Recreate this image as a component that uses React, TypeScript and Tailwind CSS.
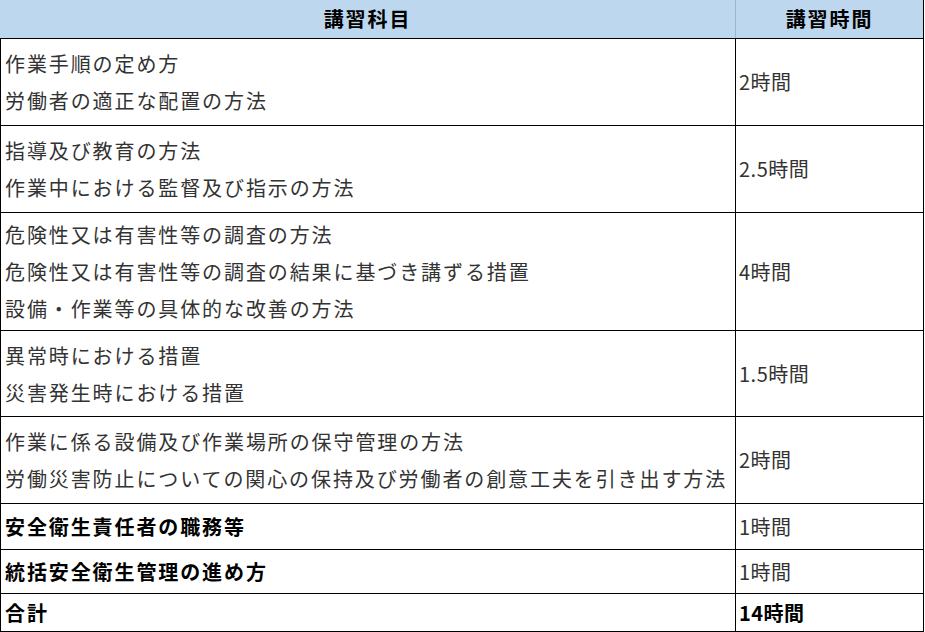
import React from 'react';

type Row = {
  lines: string[];
  time: string;
  h: string;
  bold?: boolean;
  boldTime?: boolean;
};

const rows: Row[] = [
  { lines: ['作業手順の定め方', '労働者の適正な配置の方法'], time: '2時間', h: 'h-[87px]' },
  { lines: ['指導及び教育の方法', '作業中における監督及び指示の方法'], time: '2.5時間', h: 'h-[87px]' },
  {
    lines: [
      '危険性又は有害性等の調査の方法',
      '危険性又は有害性等の調査の結果に基づき講ずる措置',
      '設備・作業等の具体的な改善の方法',
    ],
    time: '4時間',
    h: 'h-[118px]',
  },
  { lines: ['異常時における措置', '災害発生時における措置'], time: '1.5時間', h: 'h-[86px]' },
  {
    lines: ['作業に係る設備及び作業場所の保守管理の方法', '労働災害防止についての関心の保持及び労働者の創意工夫を引き出す方法'],
    time: '2時間',
    h: 'h-[87px]',
  },
  { lines: ['安全衛生責任者の職務等'], time: '1時間', h: 'h-[46px]', bold: true },
  { lines: ['統括安全衛生管理の進め方'], time: '1時間', h: 'h-[44px]', bold: true },
  { lines: ['合計'], time: '14時間', h: 'h-[38px]', bold: true, boldTime: true },
];

const App = () => {
  return (
    <div className="w-[925px] h-[632px] bg-white font-['Noto_Sans_CJK_JP',sans-serif] text-[20px] tracking-[1.9px]">
      <div className="w-[924px] border-r border-black">
        {/* ヘッダー */}
        <div className="flex h-[39px] bg-[#bdd7ee] border-b border-black font-bold text-black">
          <div className="w-[736px] border-r border-[#9db4ca] flex items-center justify-center">講習科目</div>
          <div className="flex-1 flex items-center justify-center">講習時間</div>
        </div>

        {rows.map((row, i) => (
          <div key={i} className={`flex ${row.h} border-l border-b border-black`}>
            <div
              className={`w-[735px] border-r border-black pl-[4px] flex flex-col justify-center leading-[37px] ${
                row.bold ? 'font-bold text-black' : 'text-[#333]'
              }`}
            >
              {row.lines.map((l, j) => (
                <div key={j}>{l}</div>
              ))}
            </div>
            <div
              className={`flex-1 pl-[3px] flex items-center tracking-[0.5px] ${
                row.boldTime ? 'font-bold text-black' : 'text-[#333]'
              }`}
            >
              {row.time}
            </div>
          </div>
        ))}
      </div>
    </div>
  );
};

export default App;
